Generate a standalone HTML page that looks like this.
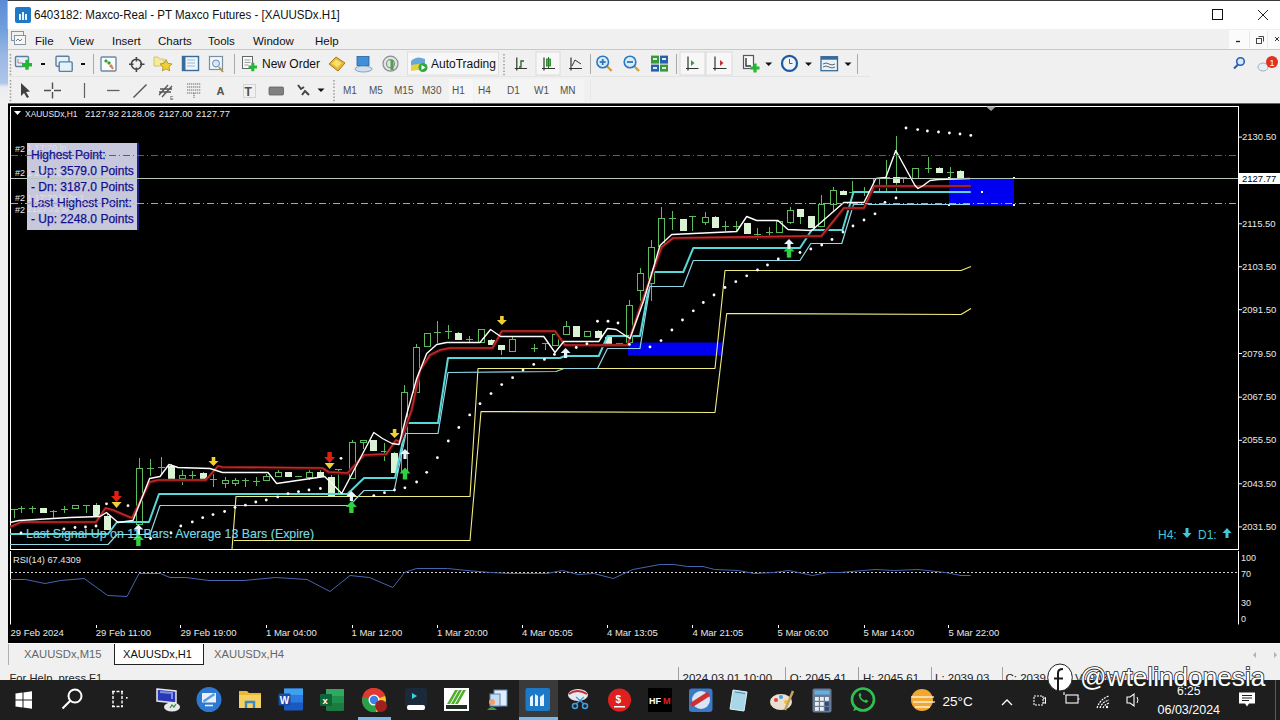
<!DOCTYPE html>
<html><head><meta charset="utf-8">
<style>
*{margin:0;padding:0;box-sizing:border-box}
html,body{width:1280px;height:720px;overflow:hidden;background:#f0f0f0;font-family:"Liberation Sans",sans-serif;position:relative}
.a{position:absolute}
.t{position:absolute;white-space:nowrap;line-height:1}
#desk{left:0;top:0;width:8px;height:720px;background:linear-gradient(#5a8ad4 0,#72a0dc 30px,#98b8e4 55px,#b0c6ea 83px,#e8ecf2 87px,#f0f0f0 100px)}
#title{left:7px;top:0;width:1273px;height:29px;background:#fff;border-top:1px solid #3a3a3a;border-left:1px solid #b8b8b8}
#menu{left:8px;top:29px;width:1272px;height:21px;background:#f0f0f0;border-bottom:1px solid #c8c8c8}
#tb1{left:8px;top:50px;width:1272px;height:27px;background:#f0f0f0}
#tb2{left:8px;top:77px;width:1272px;height:27px;background:#f0f0f0;border-bottom:1px solid #646464}
.mi{font-size:11.5px;color:#111;top:36px}
.tf{font-size:10px;color:#505050;top:86px}
#chart{left:8px;top:104px;width:1272px;height:539px;background:#000}
#tabs{left:8px;top:644px;width:1272px;height:21px;background:#f0f0f0}
#status{left:8px;top:665px;width:1272px;height:15px;background:#f0f0f0;overflow:hidden}
#task{left:0;top:680px;width:1280px;height:40px;background:#202020}
</style></head><body>
<div class="a" id="desk"></div>
<div class="a" id="title"></div>
<div class="a" id="menu"></div>
<div class="a" id="tb1"></div>
<div class="a" id="tb2"></div>
<div class="a" id="chart"></div>
<svg class="a" style="left:0;top:0" width="1280" height="720" viewBox="0 0 1280 720" font-family="Liberation Sans, sans-serif">
<rect x="10.5" y="106.5" width="1228" height="443" fill="none" stroke="#fff" stroke-width="1"/>
<path d="M10.5 551V624.5M1238.5 551V624.5" stroke="#fff" stroke-width="1"/>
<path d="M986 106.5H996L991 111Z" fill="#a0a0a0"/>
<rect x="628" y="342.5" width="95" height="13" fill="#0000f0"/>
<rect x="949" y="178" width="65" height="27.5" fill="#0000f0"/>
<rect x="948" y="177" width="2" height="2" fill="#fff"/>
<rect x="1013" y="177" width="2" height="2" fill="#fff"/>
<rect x="948" y="204" width="2" height="2" fill="#fff"/>
<rect x="1013" y="204" width="2" height="2" fill="#fff"/>
<rect x="981" y="191" width="2" height="2" fill="#fff"/>
<polyline points="232,549.5 236,496.5 470,496.5 478,368.5 715,368.5 725,270.5 961,270.5 971,266.5" fill="none" stroke="#f0ec80" stroke-width="1.1" stroke-linejoin="round" />
<polyline points="234,540.5 470,540.5 481,411.5 715,412.5 726.7,313.5 961,314.5 971,308.5" fill="none" stroke="#f0ec80" stroke-width="1.1" stroke-linejoin="round" />
<path d="M14.5 509V518" stroke="#5cbc5c" stroke-width="1"/>
<path d="M11 509.5H18" stroke="#5cbc5c" stroke-width="1"/>
<path d="M21.5 506V513" stroke="#5cbc5c" stroke-width="1"/>
<path d="M18 508.5H25" stroke="#5cbc5c" stroke-width="1"/>
<path d="M32.5 506V513" stroke="#5cbc5c" stroke-width="1"/>
<path d="M29 508.5H36" stroke="#5cbc5c" stroke-width="1"/>
<path d="M43.5 508V513" stroke="#5cbc5c" stroke-width="1"/>
<rect x="40" y="508.0" width="7" height="5.0" fill="#dcf2d4"/>
<path d="M53.5 510V518" stroke="#5cbc5c" stroke-width="1"/>
<path d="M50 511.5H57" stroke="#5cbc5c" stroke-width="1"/>
<path d="M64.5 506V513" stroke="#5cbc5c" stroke-width="1"/>
<path d="M61 509.5H68" stroke="#5cbc5c" stroke-width="1"/>
<path d="M75.5 505V509" stroke="#5cbc5c" stroke-width="1"/>
<rect x="72.5" y="505.5" width="6" height="3.0" fill="#000" stroke="#5cbc5c" stroke-width="1"/>
<path d="M86.5 505V513" stroke="#5cbc5c" stroke-width="1"/>
<path d="M83 505.5H90" stroke="#5cbc5c" stroke-width="1"/>
<path d="M96.5 503V517" stroke="#5cbc5c" stroke-width="1"/>
<rect x="93" y="505.0" width="7" height="12.0" fill="#dcf2d4"/>
<path d="M107.5 513V530" stroke="#5cbc5c" stroke-width="1"/>
<rect x="104" y="516.0" width="7" height="14.0" fill="#dcf2d4"/>
<path d="M139.5 458V525" stroke="#5cbc5c" stroke-width="1"/>
<rect x="136.5" y="468.5" width="6" height="56.0" fill="#000" stroke="#5cbc5c" stroke-width="1"/>
<path d="M150.5 459V476" stroke="#5cbc5c" stroke-width="1"/>
<path d="M147 468.5H154" stroke="#5cbc5c" stroke-width="1"/>
<path d="M161.5 457V475" stroke="#5cbc5c" stroke-width="1"/>
<path d="M158 467.5H165" stroke="#5cbc5c" stroke-width="1"/>
<path d="M171.5 464V479" stroke="#5cbc5c" stroke-width="1"/>
<rect x="168" y="466.0" width="7" height="13.0" fill="#dcf2d4"/>
<path d="M182.5 470V485" stroke="#5cbc5c" stroke-width="1"/>
<rect x="179.5" y="475.5" width="6" height="3.0" fill="#000" stroke="#5cbc5c" stroke-width="1"/>
<path d="M192.5 471V479" stroke="#5cbc5c" stroke-width="1"/>
<path d="M189 475.5H196" stroke="#5cbc5c" stroke-width="1"/>
<path d="M203.5 472V480" stroke="#5cbc5c" stroke-width="1"/>
<rect x="200" y="473.0" width="7" height="7.0" fill="#dcf2d4"/>
<path d="M213.5 474V487" stroke="#5cbc5c" stroke-width="1"/>
<path d="M210 479.5H217" stroke="#5cbc5c" stroke-width="1"/>
<path d="M225.5 477V488" stroke="#5cbc5c" stroke-width="1"/>
<rect x="222.5" y="480.5" width="6" height="3.0" fill="#000" stroke="#5cbc5c" stroke-width="1"/>
<path d="M235.5 478V486" stroke="#5cbc5c" stroke-width="1"/>
<rect x="232.5" y="480.5" width="6" height="3.0" fill="#000" stroke="#5cbc5c" stroke-width="1"/>
<path d="M245.5 478V487" stroke="#5cbc5c" stroke-width="1"/>
<path d="M242 480.5H249" stroke="#5cbc5c" stroke-width="1"/>
<path d="M256.5 477V486" stroke="#5cbc5c" stroke-width="1"/>
<path d="M253 481.5H260" stroke="#5cbc5c" stroke-width="1"/>
<path d="M266.5 474V481" stroke="#5cbc5c" stroke-width="1"/>
<rect x="263.5" y="476.5" width="6" height="4.0" fill="#000" stroke="#5cbc5c" stroke-width="1"/>
<path d="M278.5 470V477" stroke="#5cbc5c" stroke-width="1"/>
<rect x="275.5" y="472.5" width="6" height="4.0" fill="#000" stroke="#5cbc5c" stroke-width="1"/>
<path d="M288.5 472V477" stroke="#5cbc5c" stroke-width="1"/>
<rect x="285" y="472.0" width="7" height="5.0" fill="#dcf2d4"/>
<path d="M298.5 476V477" stroke="#5cbc5c" stroke-width="1"/>
<path d="M295 476.5H302" stroke="#5cbc5c" stroke-width="1"/>
<path d="M309.5 467V480" stroke="#5cbc5c" stroke-width="1"/>
<rect x="306.5" y="472.5" width="6" height="5.0" fill="#000" stroke="#5cbc5c" stroke-width="1"/>
<path d="M320.5 470V477" stroke="#5cbc5c" stroke-width="1"/>
<rect x="317" y="472.0" width="7" height="5.0" fill="#dcf2d4"/>
<path d="M331.5 475V496" stroke="#5cbc5c" stroke-width="1"/>
<rect x="328" y="477.0" width="7" height="19.0" fill="#dcf2d4"/>
<path d="M338.5 469V495" stroke="#5cbc5c" stroke-width="1"/>
<path d="M335 469.5H342" stroke="#5cbc5c" stroke-width="1"/>
<path d="M352.5 440V479" stroke="#5cbc5c" stroke-width="1"/>
<rect x="349.5" y="442.5" width="6" height="36.0" fill="#000" stroke="#5cbc5c" stroke-width="1"/>
<path d="M363.5 440V449" stroke="#5cbc5c" stroke-width="1"/>
<rect x="360.5" y="440.5" width="6" height="2.0" fill="#000" stroke="#5cbc5c" stroke-width="1"/>
<path d="M373.5 440V451" stroke="#5cbc5c" stroke-width="1"/>
<rect x="370" y="440.0" width="7" height="11.0" fill="#dcf2d4"/>
<path d="M384.5 443V461" stroke="#5cbc5c" stroke-width="1"/>
<path d="M381 451.5H388" stroke="#5cbc5c" stroke-width="1"/>
<path d="M394.5 452V473" stroke="#5cbc5c" stroke-width="1"/>
<rect x="391" y="453.0" width="7" height="20.0" fill="#dcf2d4"/>
<path d="M404.5 385V473" stroke="#5cbc5c" stroke-width="1"/>
<rect x="401.5" y="392.5" width="6" height="80.0" fill="#000" stroke="#5cbc5c" stroke-width="1"/>
<path d="M416.5 344V393" stroke="#5cbc5c" stroke-width="1"/>
<rect x="413.5" y="347.5" width="6" height="45.0" fill="#000" stroke="#5cbc5c" stroke-width="1"/>
<path d="M427.5 333V347" stroke="#5cbc5c" stroke-width="1"/>
<rect x="424.5" y="333.5" width="6" height="13.0" fill="#000" stroke="#5cbc5c" stroke-width="1"/>
<path d="M437.5 321V343" stroke="#5cbc5c" stroke-width="1"/>
<path d="M434 332.5H441" stroke="#5cbc5c" stroke-width="1"/>
<path d="M448.5 325V339" stroke="#5cbc5c" stroke-width="1"/>
<path d="M445 331.5H452" stroke="#5cbc5c" stroke-width="1"/>
<path d="M458.5 332V340" stroke="#5cbc5c" stroke-width="1"/>
<rect x="455" y="333.0" width="7" height="7.0" fill="#dcf2d4"/>
<path d="M469.5 336V342" stroke="#5cbc5c" stroke-width="1"/>
<path d="M466 339.5H473" stroke="#5cbc5c" stroke-width="1"/>
<path d="M481.5 329V343" stroke="#5cbc5c" stroke-width="1"/>
<rect x="478.5" y="329.5" width="6" height="13.0" fill="#000" stroke="#5cbc5c" stroke-width="1"/>
<path d="M491.5 339V345" stroke="#5cbc5c" stroke-width="1"/>
<rect x="488" y="340.0" width="7" height="5.0" fill="#dcf2d4"/>
<path d="M501.5 345V355" stroke="#5cbc5c" stroke-width="1"/>
<rect x="498" y="345.0" width="7" height="5.0" fill="#dcf2d4"/>
<path d="M512.5 336V352" stroke="#5cbc5c" stroke-width="1"/>
<rect x="509.5" y="339.5" width="6" height="12.0" fill="#000" stroke="#5cbc5c" stroke-width="1"/>
<path d="M534.5 344V352" stroke="#5cbc5c" stroke-width="1"/>
<path d="M531 348.5H538" stroke="#5cbc5c" stroke-width="1"/>
<path d="M545.5 343V350" stroke="#5cbc5c" stroke-width="1"/>
<path d="M542 343.5H549" stroke="#5cbc5c" stroke-width="1"/>
<path d="M555.5 334V346" stroke="#5cbc5c" stroke-width="1"/>
<rect x="552.5" y="334.5" width="6" height="11.0" fill="#000" stroke="#5cbc5c" stroke-width="1"/>
<path d="M566.5 321V335" stroke="#5cbc5c" stroke-width="1"/>
<rect x="563.5" y="326.5" width="6" height="8.0" fill="#000" stroke="#5cbc5c" stroke-width="1"/>
<path d="M576.5 326V337" stroke="#5cbc5c" stroke-width="1"/>
<rect x="573" y="326.0" width="7" height="11.0" fill="#dcf2d4"/>
<path d="M587.5 331V337" stroke="#5cbc5c" stroke-width="1"/>
<rect x="584.5" y="331.5" width="6" height="5.0" fill="#000" stroke="#5cbc5c" stroke-width="1"/>
<path d="M598.5 330V338" stroke="#5cbc5c" stroke-width="1"/>
<rect x="595" y="331.0" width="7" height="7.0" fill="#dcf2d4"/>
<path d="M608.5 336V345" stroke="#5cbc5c" stroke-width="1"/>
<rect x="605" y="337.0" width="7" height="8.0" fill="#dcf2d4"/>
<path d="M619.5 343V345" stroke="#5cbc5c" stroke-width="1"/>
<path d="M616 343.5H623" stroke="#5cbc5c" stroke-width="1"/>
<path d="M629.5 300V343" stroke="#5cbc5c" stroke-width="1"/>
<rect x="626.5" y="305.5" width="6" height="37.0" fill="#000" stroke="#5cbc5c" stroke-width="1"/>
<path d="M640.5 268V301" stroke="#5cbc5c" stroke-width="1"/>
<rect x="637.5" y="273.5" width="6" height="17.0" fill="#000" stroke="#5cbc5c" stroke-width="1"/>
<path d="M651.5 240V301" stroke="#5cbc5c" stroke-width="1"/>
<rect x="648.5" y="247.5" width="6" height="36.0" fill="#000" stroke="#5cbc5c" stroke-width="1"/>
<path d="M661.5 207V247" stroke="#5cbc5c" stroke-width="1"/>
<rect x="658.5" y="218.5" width="6" height="28.0" fill="#000" stroke="#5cbc5c" stroke-width="1"/>
<path d="M672.5 211V230" stroke="#5cbc5c" stroke-width="1"/>
<path d="M669 218.5H676" stroke="#5cbc5c" stroke-width="1"/>
<path d="M683.5 219V231" stroke="#5cbc5c" stroke-width="1"/>
<rect x="680" y="219.0" width="7" height="12.0" fill="#dcf2d4"/>
<path d="M692.5 216V231" stroke="#5cbc5c" stroke-width="1"/>
<path d="M689 216.5H696" stroke="#5cbc5c" stroke-width="1"/>
<path d="M705.5 212V225" stroke="#5cbc5c" stroke-width="1"/>
<rect x="702.5" y="217.5" width="6" height="5.0" fill="#000" stroke="#5cbc5c" stroke-width="1"/>
<path d="M715.5 216V228" stroke="#5cbc5c" stroke-width="1"/>
<rect x="712" y="217.0" width="7" height="11.0" fill="#dcf2d4"/>
<path d="M725.5 221V231" stroke="#5cbc5c" stroke-width="1"/>
<path d="M722 226.5H729" stroke="#5cbc5c" stroke-width="1"/>
<path d="M736.5 221V231" stroke="#5cbc5c" stroke-width="1"/>
<path d="M733 226.5H740" stroke="#5cbc5c" stroke-width="1"/>
<path d="M747.5 223V234" stroke="#5cbc5c" stroke-width="1"/>
<rect x="744" y="223.0" width="7" height="11.0" fill="#dcf2d4"/>
<path d="M757.5 228V240" stroke="#5cbc5c" stroke-width="1"/>
<path d="M754 234.5H761" stroke="#5cbc5c" stroke-width="1"/>
<path d="M769.5 227V238" stroke="#5cbc5c" stroke-width="1"/>
<path d="M766 232.5H773" stroke="#5cbc5c" stroke-width="1"/>
<path d="M779.5 221V233" stroke="#5cbc5c" stroke-width="1"/>
<rect x="776.5" y="221.5" width="6" height="11.0" fill="#000" stroke="#5cbc5c" stroke-width="1"/>
<path d="M790.5 207V224" stroke="#5cbc5c" stroke-width="1"/>
<rect x="787.5" y="210.5" width="6" height="12.0" fill="#000" stroke="#5cbc5c" stroke-width="1"/>
<path d="M800.5 209V224" stroke="#5cbc5c" stroke-width="1"/>
<rect x="797" y="209.0" width="7" height="8.0" fill="#dcf2d4"/>
<path d="M811.5 216V228" stroke="#5cbc5c" stroke-width="1"/>
<rect x="808" y="216.0" width="7" height="12.0" fill="#dcf2d4"/>
<path d="M821.5 195V227" stroke="#5cbc5c" stroke-width="1"/>
<rect x="818.5" y="204.5" width="6" height="22.0" fill="#000" stroke="#5cbc5c" stroke-width="1"/>
<path d="M833.5 187V211" stroke="#5cbc5c" stroke-width="1"/>
<rect x="830.5" y="190.5" width="6" height="14.0" fill="#000" stroke="#5cbc5c" stroke-width="1"/>
<path d="M843.5 190V195" stroke="#5cbc5c" stroke-width="1"/>
<rect x="840" y="191.0" width="7" height="4.0" fill="#dcf2d4"/>
<path d="M852.5 181V198" stroke="#5cbc5c" stroke-width="1"/>
<path d="M849 192.5H856" stroke="#5cbc5c" stroke-width="1"/>
<path d="M864.5 187V196" stroke="#5cbc5c" stroke-width="1"/>
<path d="M861 191.5H868" stroke="#5cbc5c" stroke-width="1"/>
<path d="M876.5 178V192" stroke="#5cbc5c" stroke-width="1"/>
<rect x="873.5" y="178.5" width="6" height="13.0" fill="#000" stroke="#5cbc5c" stroke-width="1"/>
<path d="M886.5 160V192" stroke="#5cbc5c" stroke-width="1"/>
<path d="M883 177.5H890" stroke="#5cbc5c" stroke-width="1"/>
<path d="M896.5 136V193" stroke="#5cbc5c" stroke-width="1"/>
<rect x="893" y="177.0" width="7" height="6.0" fill="#dcf2d4"/>
<path d="M903.5 177V183" stroke="#5cbc5c" stroke-width="1"/>
<path d="M900 177.5H907" stroke="#5cbc5c" stroke-width="1"/>
<path d="M915.5 168V179" stroke="#5cbc5c" stroke-width="1"/>
<rect x="912.5" y="168.5" width="6" height="10.0" fill="#000" stroke="#5cbc5c" stroke-width="1"/>
<path d="M928.5 157V173" stroke="#5cbc5c" stroke-width="1"/>
<path d="M925 168.5H932" stroke="#5cbc5c" stroke-width="1"/>
<path d="M939.5 167V173" stroke="#5cbc5c" stroke-width="1"/>
<rect x="936" y="168.0" width="7" height="5.0" fill="#dcf2d4"/>
<path d="M950.5 167V179" stroke="#5cbc5c" stroke-width="1"/>
<path d="M947 172.5H954" stroke="#5cbc5c" stroke-width="1"/>
<path d="M960.5 170V179" stroke="#5cbc5c" stroke-width="1"/>
<rect x="957" y="171.0" width="7" height="8.0" fill="#dcf2d4"/>
<polyline points="10,534 108,534 117,522 149,522 159,494 347.5,494 364,478 395,478 406.8,423 438,423 448,358 560,358 565,356 598.75,356 607.5,336 640,336 651.7,272 683.3,272 693.3,248 800,248 811.7,230 842.5,230 853.5,192 970.8,192" fill="none" stroke="#58d8d8" stroke-width="2" stroke-linejoin="round" />
<polyline points="10,544.5 108,544.5 117,534.5 150,534.5 160,505.5 349.6,505.5 364,490.5 394.2,490.5 405.9,433.5 438,433.5 448,372.5 556,371.5 564,368.5 597.5,368.5 607.5,348.5 640,348.5 650,286.5 683.3,286.5 693.3,260.5 800,260.5 810.8,243.5 841.8,243.5 853.5,204.5 970,204.5" fill="none" stroke="#90d8e8" stroke-width="1.2" stroke-linejoin="round" />
<polyline points="10,527.5 21,522.5 96,522.5 105.6,508.5 113,510.5 132,518.5 149.6,482.5 158,480.5 205.8,480.5 218,466.5 222.5,467.5 322.5,468.5 328.75,472.5 347.5,473.5 364,455.5 386.4,454.5 396,440.5 400,442.5 411.7,410.5 420,370.5 430,355.5 440,350.5 450,348.5 492.5,348.5 501.9,331.5 555,331.5 565,345.5 627.5,345.5 642.5,300.5 661.7,247.5 673,238.5 810,236.5 821.4,236.5 843.8,208.5 864,208.5 874,186.5 970.8,186.5" fill="none" stroke="#480c0c" stroke-width="3.4" stroke-linejoin="round" />
<polyline points="10,527 21,522 96,522 105.6,508 113,510 132,518 149.6,482 158,480 205.8,480 218,466 222.5,467 322.5,468 328.75,472 347.5,473 364,455 386.4,454 396,440 400,442 411.7,410 420,370 430,355 440,350 450,348 492.5,348 501.9,331 555,331 565,345 627.5,345 642.5,300 661.7,247 673,238 810,236 821.4,236 843.8,208 864,208 874,186 970.8,186" fill="none" stroke="#c02a2a" stroke-width="1.6" stroke-linejoin="round" />
<polyline points="10,522.5 19,520.5 70,517.5 100,516.5 106.5,512.5 118,522.5 133,520.5 149.6,478.5 160,476.5 169,464.5 178,467.5 210,468.5 222.5,472.5 268,472.5 276.7,483.5 324.6,476.5 333,484.5 341.7,493.5 373.8,432.5 382.5,438.5 392,443.5 399,444.5 407.8,410.5 416.7,378.5 426.7,353.5 436.7,344.5 446.7,342.5 480,342.5 490.6,329.5 500.6,336.5 543.75,336.5 555,352.5 563.75,341.5 598.75,341.5 607.5,328.5 616.25,329.5 623.75,334.5 630,338.5 643.75,300.5 660,245.5 671.7,234.5 736.7,231.5 746.7,216.5 756.7,220.5 778,220.5 788,229.5 811.7,230.5 843.8,202.5 864,202.5 875.9,178.5 885.8,177.5 895.8,150.5 915,185.5 918,188.5 923.3,185.5 930,180.5 938.3,179.5 970,178.5" fill="none" stroke="#ffffff" stroke-width="1.4" stroke-linejoin="round" />
<circle cx="21" cy="533" r="1.4" fill="#fff"/>
<circle cx="64" cy="529" r="1.4" fill="#fff"/>
<circle cx="75" cy="527.5" r="1.4" fill="#fff"/>
<circle cx="85.5" cy="527" r="1.4" fill="#fff"/>
<circle cx="96" cy="526" r="1.4" fill="#fff"/>
<circle cx="106.5" cy="503.8" r="1.4" fill="#fff"/>
<circle cx="128" cy="505.7" r="1.4" fill="#fff"/>
<circle cx="150.6" cy="538.5" r="1.4" fill="#fff"/>
<circle cx="171" cy="533" r="1.4" fill="#fff"/>
<circle cx="180.8" cy="526" r="1.4" fill="#fff"/>
<circle cx="192.3" cy="521.9" r="1.4" fill="#fff"/>
<circle cx="202.7" cy="517.7" r="1.4" fill="#fff"/>
<circle cx="213" cy="514.6" r="1.4" fill="#fff"/>
<circle cx="224.6" cy="511.5" r="1.4" fill="#fff"/>
<circle cx="235" cy="507.3" r="1.4" fill="#fff"/>
<circle cx="245.4" cy="505.2" r="1.4" fill="#fff"/>
<circle cx="255.8" cy="502" r="1.4" fill="#fff"/>
<circle cx="266.25" cy="500" r="1.4" fill="#fff"/>
<circle cx="277.7" cy="496.9" r="1.4" fill="#fff"/>
<circle cx="288" cy="493.75" r="1.4" fill="#fff"/>
<circle cx="298.5" cy="491.7" r="1.4" fill="#fff"/>
<circle cx="309" cy="490" r="1.4" fill="#fff"/>
<circle cx="320.4" cy="488.5" r="1.4" fill="#fff"/>
<circle cx="341" cy="458.3" r="1.4" fill="#fff"/>
<circle cx="373.8" cy="495.6" r="1.4" fill="#fff"/>
<circle cx="384.5" cy="492.7" r="1.4" fill="#fff"/>
<circle cx="394.5" cy="490" r="1.4" fill="#fff"/>
<circle cx="404.9" cy="487.8" r="1.4" fill="#fff"/>
<circle cx="416.6" cy="482" r="1.4" fill="#fff"/>
<circle cx="426.7" cy="472.3" r="1.4" fill="#fff"/>
<circle cx="437.4" cy="457.7" r="1.4" fill="#fff"/>
<circle cx="448.3" cy="441" r="1.4" fill="#fff"/>
<circle cx="458.8" cy="427.5" r="1.4" fill="#fff"/>
<circle cx="469.7" cy="414.9" r="1.4" fill="#fff"/>
<circle cx="480" cy="403.7" r="1.4" fill="#fff"/>
<circle cx="491" cy="393.6" r="1.4" fill="#fff"/>
<circle cx="501.7" cy="384.6" r="1.4" fill="#fff"/>
<circle cx="512.6" cy="377.7" r="1.4" fill="#fff"/>
<circle cx="523" cy="370" r="1.4" fill="#fff"/>
<circle cx="533.75" cy="364.4" r="1.4" fill="#fff"/>
<circle cx="544.4" cy="359.4" r="1.4" fill="#fff"/>
<circle cx="554.4" cy="354.4" r="1.4" fill="#fff"/>
<circle cx="576.25" cy="347.5" r="1.4" fill="#fff"/>
<circle cx="586.9" cy="343.75" r="1.4" fill="#fff"/>
<circle cx="597.5" cy="321.25" r="1.4" fill="#fff"/>
<circle cx="608" cy="321.25" r="1.4" fill="#fff"/>
<circle cx="618" cy="323" r="1.4" fill="#fff"/>
<circle cx="629.4" cy="344.4" r="1.4" fill="#fff"/>
<circle cx="650" cy="346.9" r="1.4" fill="#fff"/>
<circle cx="661" cy="340.6" r="1.4" fill="#fff"/>
<circle cx="671.9" cy="330" r="1.4" fill="#fff"/>
<circle cx="682.5" cy="320" r="1.4" fill="#fff"/>
<circle cx="693.3" cy="310.8" r="1.4" fill="#fff"/>
<circle cx="703.3" cy="302.5" r="1.4" fill="#fff"/>
<circle cx="714" cy="295" r="1.4" fill="#fff"/>
<circle cx="725" cy="287.5" r="1.4" fill="#fff"/>
<circle cx="735.8" cy="281.7" r="1.4" fill="#fff"/>
<circle cx="746.7" cy="275.8" r="1.4" fill="#fff"/>
<circle cx="757.5" cy="270" r="1.4" fill="#fff"/>
<circle cx="767.5" cy="265" r="1.4" fill="#fff"/>
<circle cx="778.3" cy="259" r="1.4" fill="#fff"/>
<circle cx="789" cy="256" r="1.4" fill="#fff"/>
<circle cx="800" cy="252.5" r="1.4" fill="#fff"/>
<circle cx="810.8" cy="249" r="1.4" fill="#fff"/>
<circle cx="821.7" cy="245" r="1.4" fill="#fff"/>
<circle cx="832" cy="239.5" r="1.4" fill="#fff"/>
<circle cx="843" cy="232" r="1.4" fill="#fff"/>
<circle cx="853" cy="226" r="1.4" fill="#fff"/>
<circle cx="864" cy="220" r="1.4" fill="#fff"/>
<circle cx="875" cy="213.8" r="1.4" fill="#fff"/>
<circle cx="885" cy="202.5" r="1.4" fill="#fff"/>
<circle cx="896" cy="198" r="1.4" fill="#fff"/>
<circle cx="906" cy="128" r="1.4" fill="#fff"/>
<circle cx="917.7" cy="129.6" r="1.4" fill="#fff"/>
<circle cx="927.4" cy="131" r="1.4" fill="#fff"/>
<circle cx="938.5" cy="132" r="1.4" fill="#fff"/>
<circle cx="949.4" cy="133" r="1.4" fill="#fff"/>
<circle cx="960" cy="134" r="1.4" fill="#fff"/>
<circle cx="970.8" cy="135.4" r="1.4" fill="#fff"/>
<path d="M116.5 502L122.0 496H118.7V491H114.3V496H111.0Z" fill="#e02010"/>
<path d="M116.5 508L121.5 502H118.7V502H114.3V502H111.5Z" fill="#f0d040"/>
<path d="M329.6 463L335.1 457H331.8V452H327.40000000000003V457H324.1Z" fill="#e02010"/>
<path d="M329.6 469L334.6 463H331.8V463H327.40000000000003V463H324.6Z" fill="#f0d040"/>
<path d="M213.5 466L218.5 461H215.3V457H211.7V461H208.5Z" fill="#f0d030"/>
<path d="M394.6 438L399.6 433H396.40000000000003V429H392.8V433H389.6Z" fill="#f0d030"/>
<path d="M501.9 325L506.9 320H503.7V316H500.09999999999997V320H496.9Z" fill="#f0d030"/>
<path d="M138.4 534L143.9 540H140.6V546H136.20000000000002V540H132.9Z" fill="#30d040"/>
<path d="M351.4 501L356.9 507H353.59999999999997V513H349.2V507H345.9Z" fill="#30d040"/>
<path d="M405 467.5L410.5 473.5H407.2V479.5H402.8V473.5H399.5Z" fill="#30d040"/>
<path d="M789 245.5L794.5 251.5H791.2V257.5H786.8V251.5H783.5Z" fill="#30d040"/>
<path d="M138.4 524.5L143.4 529.5H140.0V534.5H136.8V529.5H133.4Z" fill="#e8f4ff"/>
<path d="M351.4 491L356.4 496H353.0V501H349.79999999999995V496H346.4Z" fill="#e8f4ff"/>
<path d="M405 449L410 454H406.6V459H403.4V454H400Z" fill="#e8f4ff"/>
<path d="M565.6 348L570.6 353H567.2V358H564.0V353H560.6Z" fill="#e8f4ff"/>
<path d="M789 239L794 244H790.6V249H787.4V244H784Z" fill="#e8f4ff"/>
<line x1="11" y1="572.5" x2="1238" y2="572.5" stroke="#d0d0d0" stroke-width="1" stroke-dasharray="2 2"/>
<polyline points="10,579.5 25.6,579.5 45,583.5 60.8,580.5 84.2,578.5 107.7,595.5 127,596.5 139,573.5 160.4,573.5 170,577.5 185.8,577.5 209,580.5 244,580.5 275.6,577.5 307,579.5 330,591.5 350,575.5 369.4,577.5 392.8,587.5 404.5,572.5 416.25,568.5 447.5,568.5 467,570.5 490.5,572.5 510,573.5 546.9,573.5 562.5,570.5 578,574.5 593.75,573.5 613.3,578.5 632.8,569.5 660,564.5 673.8,564.5 687.5,566.5 703,566.5 714.8,569.5 738.3,570.5 754,573.5 773.4,572.5 789,570.5 812.5,575.5 828,572.5 839.8,572.5 875,569.5 894.5,570.5 918,569.5 945.3,572.5 961,575.5 970.7,575.5" fill="none" stroke="#4664b0" stroke-width="1" stroke-linejoin="round" />
<path d="M1239 137.1H1242" stroke="#fff"/>
<text x="1242" y="140.1" font-size="9.5" fill="#e8e8e8">2130.50</text>
<path d="M1239 223.8H1242" stroke="#fff"/>
<text x="1242" y="226.8" font-size="9.5" fill="#e8e8e8">2115.50</text>
<path d="M1239 266.75H1242" stroke="#fff"/>
<text x="1242" y="269.75" font-size="9.5" fill="#e8e8e8">2103.50</text>
<path d="M1239 309.7H1242" stroke="#fff"/>
<text x="1242" y="312.7" font-size="9.5" fill="#e8e8e8">2091.50</text>
<path d="M1239 353.5H1242" stroke="#fff"/>
<text x="1242" y="356.5" font-size="9.5" fill="#e8e8e8">2079.50</text>
<path d="M1239 397.2H1242" stroke="#fff"/>
<text x="1242" y="400.2" font-size="9.5" fill="#e8e8e8">2067.50</text>
<path d="M1239 440.3H1242" stroke="#fff"/>
<text x="1242" y="443.3" font-size="9.5" fill="#e8e8e8">2055.50</text>
<path d="M1239 483.8H1242" stroke="#fff"/>
<text x="1242" y="486.8" font-size="9.5" fill="#e8e8e8">2043.50</text>
<path d="M1239 526.9H1242" stroke="#fff"/>
<text x="1242" y="529.9" font-size="9.5" fill="#e8e8e8">2031.50</text>
<rect x="1239" y="173" width="41" height="11" fill="#fff"/>
<text x="1242" y="181.8" font-size="9.5" fill="#000">2127.77</text>
<text x="1241" y="560.6" font-size="9" fill="#e8e8e8">100</text>
<text x="1241" y="576.6" font-size="9" fill="#e8e8e8">70</text>
<text x="1241" y="606.4" font-size="9" fill="#e8e8e8">30</text>
<text x="1241" y="621.7" font-size="9" fill="#e8e8e8">0</text>
<text x="10.5" y="636" font-size="9.5" fill="#e8e8e8">29 Feb 2024</text>
<path d="M96.5 625V628" stroke="#fff"/>
<text x="95.75" y="636" font-size="9.5" fill="#e8e8e8">29 Feb 11:00</text>
<path d="M180.5 625V628" stroke="#fff"/>
<text x="180.5" y="636" font-size="9.5" fill="#e8e8e8">29 Feb 19:00</text>
<path d="M266.5 625V628" stroke="#fff"/>
<text x="266" y="636" font-size="9.5" fill="#e8e8e8">1 Mar 04:00</text>
<path d="M352.5 625V628" stroke="#fff"/>
<text x="351.5" y="636" font-size="9.5" fill="#e8e8e8">1 Mar 12:00</text>
<path d="M437.5 625V628" stroke="#fff"/>
<text x="437" y="636" font-size="9.5" fill="#e8e8e8">1 Mar 20:00</text>
<path d="M522.5 625V628" stroke="#fff"/>
<text x="522" y="636" font-size="9.5" fill="#e8e8e8">4 Mar 05:05</text>
<path d="M607.5 625V628" stroke="#fff"/>
<text x="607" y="636" font-size="9.5" fill="#e8e8e8">4 Mar 13:05</text>
<path d="M692.5 625V628" stroke="#fff"/>
<text x="692.5" y="636" font-size="9.5" fill="#e8e8e8">4 Mar 21:05</text>
<path d="M778.5 625V628" stroke="#fff"/>
<text x="777.5" y="636" font-size="9.5" fill="#e8e8e8">5 Mar 06:00</text>
<path d="M864.5 625V628" stroke="#fff"/>
<text x="863.5" y="636" font-size="9.5" fill="#e8e8e8">5 Mar 14:00</text>
<path d="M948.5 625V628" stroke="#fff"/>
<text x="948.5" y="636" font-size="9.5" fill="#e8e8e8">5 Mar 22:00</text>
<path d="M14 111H21L17.5 115Z" fill="#fff"/>
<text x="25" y="117" font-size="9.4" fill="#e8e8e8" textLength="52.5" lengthAdjust="spacingAndGlyphs">XAUUSDx,H1</text>
<text x="85" y="117" font-size="9.4" fill="#e8e8e8">2127.92</text>
<text x="121" y="117" font-size="9.4" fill="#e8e8e8">2128.06</text>
<text x="158.7" y="117" font-size="9.4" fill="#e8e8e8">2127.00</text>
<text x="196" y="117" font-size="9.4" fill="#e8e8e8">2127.77</text>
<text x="13" y="563" font-size="9.25" fill="#e8e8e8">RSI(14) 67.4309</text>
<text x="15" y="151.5" font-size="9" fill="#e8e8e8">#2</text>
<text x="15" y="176" font-size="9" fill="#e8e8e8">#2</text>
<text x="15" y="201" font-size="9" fill="#e8e8e8">#2</text>
<text x="15" y="213" font-size="9" fill="#e8e8e8">#2</text>
<rect x="27" y="143" width="112" height="87" fill="#c8c8dc"/>
<rect x="137" y="143" width="2" height="87" fill="#202080"/>
<text x="31" y="159" font-size="12" fill="#10108a" stroke="#10108a" stroke-width="0.25">Highest Point:</text>
<text x="31" y="175" font-size="12" fill="#10108a" stroke="#10108a" stroke-width="0.25">- Up: 3579.0 Points</text>
<text x="31" y="191" font-size="12" fill="#10108a" stroke="#10108a" stroke-width="0.25">- Dn: 3187.0 Points</text>
<text x="31" y="207" font-size="12" fill="#10108a" stroke="#10108a" stroke-width="0.25">Last Highest Point:</text>
<text x="31" y="223" font-size="12" fill="#10108a" stroke="#10108a" stroke-width="0.25">- Up: 2248.0 Points</text>
<line x1="11" y1="155.5" x2="1238" y2="155.5" stroke="#b83838" stroke-width="1" stroke-dasharray="7 3 1 3"/>
<line x1="11" y1="178.5" x2="1238" y2="178.5" stroke="#b8c8b8" stroke-width="1"/>
<line x1="11" y1="203.5" x2="1238" y2="203.5" stroke="#94b494" stroke-width="1" stroke-dasharray="7 3 1 3"/>
<text x="27" y="151" font-size="9" fill="#ffffff" fill-opacity="0.45">1 17:70 ln</text>
<text x="27" y="175.5" font-size="9" fill="#ffffff" fill-opacity="0.45">1 2127.0 ,p</text>
<text x="27" y="200.5" font-size="9" fill="#ffffff" fill-opacity="0.45">1 17:70 ln hr 1</text>
<text x="27" y="212" font-size="9" fill="#ffffff" fill-opacity="0.45">2127.72 S</text>
<text x="26" y="537.8" font-size="12.4" fill="#78d8e0" stroke="#78d8e0" stroke-width="0.15">Last Signal Up on 11 Bars: Average 13 Bars (Expire)</text>
<text x="1158" y="538.9" font-size="12" fill="#40c8d8">H4:</text>
<text x="1198" y="538.9" font-size="12" fill="#40c8d8">D1:</text>
<path d="M1187 538L1191.5 533H1188.5V528H1185.5V533H1182.5Z" fill="#40c8d8"/>
<path d="M1227 528L1231.5 533H1228.5V538H1225.5V533H1222.5Z" fill="#40c8d8"/>
</svg>
<div class="a" id="tabs"></div>
<div class="a" id="status"></div>
<div class="a" id="task"></div>

<!-- title -->
<div class="a" style="left:15px;top:7px;width:16px;height:16px;background:#1e78c8;border-radius:2px"></div>
<svg class="a" style="left:15px;top:7px" width="16" height="16"><rect x="4" y="7" width="2" height="6" fill="#e8f2fc"/><rect x="7" y="5" width="2" height="8" fill="#e8f2fc"/><rect x="10" y="7" width="2" height="6" fill="#e8f2fc"/></svg>
<div class="t" style="left:34px;top:9px;font-size:12px;color:#111;transform:scaleX(0.962);transform-origin:0 0">6403182: Maxco-Real - PT Maxco Futures - [XAUUSDx.H1]</div>
<div class="a" style="left:1212px;top:9px;width:11px;height:11px;border:1px solid #111"></div>
<svg class="a" style="left:1257px;top:9px" width="12" height="12"><path d="M1 1L11 11M11 1L1 11" stroke="#222" stroke-width="1"/></svg>

<!-- menu -->
<div class="t mi" style="left:35px">File</div>
<div class="t mi" style="left:69px">View</div>
<div class="t mi" style="left:112px">Insert</div>
<div class="t mi" style="left:158px">Charts</div>
<div class="t mi" style="left:208px">Tools</div>
<div class="t mi" style="left:253px">Window</div>
<div class="t mi" style="left:315px">Help</div>

<svg class="a" style="left:0;top:0" width="1280" height="110" viewBox="0 0 1280 110" font-family="Liberation Sans, sans-serif">
<line x1="10.5" y1="54" x2="10.5" y2="76" stroke="#9a9a9a" stroke-width="1.5" stroke-dasharray="1.5 1.8"/>
<line x1="10.5" y1="80" x2="10.5" y2="102" stroke="#9a9a9a" stroke-width="1.5" stroke-dasharray="1.5 1.8"/>
<line x1="504" y1="54" x2="504" y2="76" stroke="#9a9a9a" stroke-width="1.5" stroke-dasharray="1.5 1.8"/>
<line x1="334" y1="80" x2="334" y2="102" stroke="#9a9a9a" stroke-width="1.5" stroke-dasharray="1.5 1.8"/>
<line x1="93.5" y1="54" x2="93.5" y2="74" stroke="#a8a8a8" stroke-width="1"/>
<line x1="234.5" y1="54" x2="234.5" y2="74" stroke="#a8a8a8" stroke-width="1"/>
<line x1="590.5" y1="54" x2="590.5" y2="74" stroke="#a8a8a8" stroke-width="1"/>
<line x1="676.5" y1="54" x2="676.5" y2="74" stroke="#a8a8a8" stroke-width="1"/>
<line x1="857.5" y1="54" x2="857.5" y2="74" stroke="#a8a8a8" stroke-width="1"/>
<line x1="590.5" y1="80" x2="590.5" y2="102" stroke="#e8e8e8"/>
<line x1="8" y1="76.5" x2="870" y2="76.5" stroke="#e4e4e4"/>
<rect x="407.5" y="52" width="91" height="23" fill="#f7f7f7" stroke="#dadada" stroke-width="0.8"/>
<rect x="536" y="52" width="24" height="23" fill="#f7f7f7" stroke="#d4d4d4" stroke-width="0.8"/>
<rect x="680" y="52" width="25" height="23" fill="#f7f7f7" stroke="#d4d4d4" stroke-width="0.8"/>
<rect x="706" y="52" width="26" height="23" fill="#f7f7f7" stroke="#d4d4d4" stroke-width="0.8"/>
<rect x="449" y="79" width="24" height="23" fill="#f7f7f7"/>
<rect x="474" y="79" width="110" height="23" fill="#f4f4f4"/>
<rect x="15.5" y="56.5" width="13" height="10" fill="#e4f2fa" stroke="#5a7fa0" stroke-width="1.4" rx="1"/>
<path d="M18 59v4h5" stroke="#a06080" stroke-width="0.8" fill="none"/>
<path d="M22.0 64.8H32.0M27 59.8V69.8" stroke="#22b830" stroke-width="3.4"/>
<rect x="41" y="63" width="4" height="2" fill="#111"/>
<rect x="56.0" y="56.2" width="13" height="10" fill="#e4f2fa" stroke="#5a7fa0" stroke-width="1.4" rx="1"/>
<rect x="59.2" y="61.9" width="13" height="9.5" fill="#e4f2fa" stroke="#5a7fa0" stroke-width="1.4" rx="1"/>
<rect x="81" y="63" width="4" height="2" fill="#111"/>
<rect x="101.0" y="57.0" width="15" height="14" fill="#fbfdff" stroke="#6a88a8" stroke-width="1.4" rx="1"/>
<path d="M104 61l2-2 2 2-2 2zM107 63l2-2 2 2-2 2z" fill="#30a030"/><path d="M109 66l2-2 2 2-2 2zM111 68l1.5-1.5 1.5 1.5-1.5 1.5z" fill="#e08040"/>
<circle cx="136.4" cy="64.2" r="5" fill="none" stroke="#444" stroke-width="1.6"/>
<path d="M129 64.2h4.5M140 64.2h4.5M136.4 57v4.5M136.4 67.5v4.5" stroke="#444" stroke-width="1.6"/>
<path d="M154 57h4l1.5 2H164v7h-10z" fill="#f4ec98" stroke="#c8b860" stroke-width="0.8"/>
<path d="M166 59.5l1.9 3.8 4.1.6-3 2.9.7 4.1-3.7-2-3.7 2 .7-4.1-3-2.9 4.1-.6z" fill="#f0d030" stroke="#a08020" stroke-width="0.7"/>
<rect x="182.5" y="56.5" width="16" height="14" fill="#eef6fc" stroke="#3a6a98" stroke-width="1.4"/>
<rect x="182.5" y="56.5" width="3" height="14" fill="#3a6a98"/>
<path d="M187 60h8M187 63h8M187 66h8" stroke="#8aa8c8" stroke-width="0.8"/>
<rect x="209.5" y="56.5" width="13" height="13" fill="#f4f8fc" stroke="#7890a8" stroke-width="1.2"/>
<circle cx="216" cy="63.5" r="3.5" fill="#d8e8f4" stroke="#6a88a8" stroke-width="1"/>
<path d="M219 67l4 5" stroke="#c09040" stroke-width="2"/>
<rect x="242.5" y="56.5" width="10" height="12" fill="#fafafa" stroke="#606868" stroke-width="1"/>
<path d="M244.5 60h6M244.5 62.5h6M244.5 65h4" stroke="#888" stroke-width="0.8"/>
<path d="M248.55 67H257.05M252.8 62.75V71.25" stroke="#22b830" stroke-width="3"/>
<path d="M329 64l7-7 9 6-7 8z" fill="#e8b838" stroke="#a87818" stroke-width="1"/><path d="M332 63.5l4-4 5.5 3.5-4 4.5z" fill="#f8e070"/>
<rect x="357" y="56.5" width="12" height="9" fill="#4090d8" stroke="#2a60a0" stroke-width="0.8"/>
<ellipse cx="363.5" cy="69" rx="8.5" ry="3" fill="#d0e0ee" stroke="#7090b0" stroke-width="0.8"/>
<circle cx="390.5" cy="63.7" r="7.5" fill="#e0e4e0" stroke="#8a9090" stroke-width="1.2"/><circle cx="390.5" cy="63.7" r="4" fill="none" stroke="#8a9090" stroke-width="1.2"/><path d="M392 60v10" stroke="#50a050" stroke-width="3"/>
<path d="M411 61q6-6 14-2v8q-7 3-14 0z" fill="#68a8d8"/><path d="M411 65l14-2v6l-14 2z" fill="#e8d040"/><circle cx="423" cy="67.5" r="4.5" fill="#30a840"/><path d="M421.5 65v5l4-2.5z" fill="#fff"/>
<text x="431" y="68.3" font-size="12" fill="#111">AutoTrading</text>
<text x="262" y="68.3" font-size="12" fill="#111">New Order</text>
<path d="M516.8 57.5V70.5M514.8 68.5H527" stroke="#333" stroke-width="1.2" fill="none"/>
<path d="M519 67h2v-6h3" stroke="#207020" stroke-width="1.4" fill="none"/>
<path d="M544 57.5V70.5M542 68.5H555" stroke="#333" stroke-width="1.2" fill="none"/>
<rect x="546.5" y="59" width="4" height="7" fill="#40c040" stroke="#208020" stroke-width="0.8"/><path d="M548.5 57v11" stroke="#208020"/>
<path d="M571 57.5V70.5M569 68.5H582" stroke="#333" stroke-width="1.2" fill="none"/>
<path d="M572 66l3-6 6 4" stroke="#333" stroke-width="1" fill="none"/>
<path d="M606.7 66l5 5" stroke="#d0a040" stroke-width="2.4"/>
<circle cx="602.7" cy="62" r="5.8" fill="#d8ecfa" stroke="#2a78c0" stroke-width="1.6"/>
<path d="M599.7 62h6" stroke="#2a78c0" stroke-width="1.8"/>
<path d="M602.7 59v6" stroke="#2a78c0" stroke-width="1.8"/>
<path d="M634 66l5 5" stroke="#d0a040" stroke-width="2.4"/>
<circle cx="630" cy="62" r="5.8" fill="#d8ecfa" stroke="#2a78c0" stroke-width="1.6"/>
<path d="M627 62h6" stroke="#2a78c0" stroke-width="1.8"/>
<rect x="651" y="55.6" width="8" height="8" fill="#3a9a3a"/><rect x="660" y="55.6" width="8" height="8" fill="#2a60b0"/><rect x="651" y="64.6" width="8" height="7" fill="#2a60b0"/><rect x="660" y="64.6" width="8" height="7" fill="#3a9a3a"/>
<path d="M653 59h4M662 59h4M653 68h4M662 68h4" stroke="#e0f0e0" stroke-width="2"/>
<path d="M688 56.5V70.5M686 68.5H698.5" stroke="#333" stroke-width="1.2" fill="none"/>
<path d="M691 60v6l3.5-3z" fill="#30a030"/>
<path d="M715 56.5V70.5M713 68.5H726.5" stroke="#333" stroke-width="1.2" fill="none"/>
<path d="M720 60v6l3.5-3z" fill="#c03030"/>
<rect x="743.5" y="55.5" width="10" height="13" fill="#fafafa" stroke="#556" stroke-width="1.2"/>
<path d="M746 58v8h5" stroke="#333" stroke-width="1.4" fill="none"/>
<path d="M750.5 68H759.5M755 63.5V72.5" stroke="#22b830" stroke-width="3.2"/>
<path d="M765.2 62.5h7l-3.5 3.5z" fill="#111"/>
<path d="M805.0 62.5h7l-3.5 3.5z" fill="#111"/>
<path d="M844.5 62.5h7l-3.5 3.5z" fill="#111"/>
<circle cx="789.5" cy="63.4" r="7.5" fill="#eef4fa" stroke="#1a5aa0" stroke-width="2.2"/><path d="M789.5 59v4.5h3" stroke="#c03030" stroke-width="1" fill="none"/>
<rect x="821" y="56.7" width="16.5" height="14" fill="#e8f2fa" stroke="#3a6a98" stroke-width="1.3"/><rect x="821" y="56.7" width="16.5" height="3" fill="#3a6a98"/><path d="M823 64q3-2 6 0t6 0M823 67q3-2 6 0t6 0" stroke="#555" stroke-width="0.9" fill="none"/>
<circle cx="1240.5" cy="61.5" r="3.8" fill="#d8e8f8" stroke="#2a60b0" stroke-width="1.6"/><path d="M1238 64.5l-4 4" stroke="#2a60b0" stroke-width="2.2"/>
<ellipse cx="1263" cy="67" rx="5" ry="4" fill="#e8eef4" stroke="#a0b0c0" stroke-width="1"/>
<circle cx="1272" cy="62" r="6" fill="#e03020"/><text x="1269.5" y="66" font-size="9" fill="#fff">1</text>
<rect x="1229" y="30" width="51" height="19" fill="#fbfbfb"/><path d="M1249.5 31v17M1267.5 31v17" stroke="#e8e8e8" stroke-width="1"/>
<path d="M1236 41.5h4" stroke="#222" stroke-width="1.3"/>
<rect x="1256.5" y="38.5" width="5" height="5" fill="none" stroke="#333" stroke-width="0.9"/><path d="M1258.5 36.5h5v5" stroke="#333" stroke-width="0.9" fill="none"/>
<path d="M1275 37l4 4M1279 37l-4 4" stroke="#333" stroke-width="1"/>
<rect x="11.5" y="31.5" width="12" height="9" fill="none" stroke="#7a8a9a" stroke-width="0.9"/><rect x="14.5" y="35.5" width="11" height="9" fill="#f4f6f8" stroke="#7a8a9a" stroke-width="0.9"/><path d="M16 41l2-2 2 2 2-2" stroke="#555" stroke-width="0.8" fill="none"/>
<path d="M21 83l0 13 3-3 3 5 2-1-3-5 4-0.5z" fill="#404040"/>
<path d="M44 90.5h7M54 90.5h7M52.5 82.5v6.5M52.5 92v6.5" stroke="#505050" stroke-width="1.4"/>
<path d="M84.5 83v15" stroke="#606060" stroke-width="1.2"/>
<path d="M107 90.5h12.5" stroke="#606060" stroke-width="1.3"/>
<path d="M133.5 97.5l13-13" stroke="#555" stroke-width="1.4"/>
<path d="M159 95l9-10M162 97l10-11M160 89h12M159 92h12" stroke="#555" stroke-width="1.3"/><text x="170" y="100" font-size="5" fill="#555">E</text>
<path d="M187 84h14M187 87h14M187 90h14M187 93h14M194 93v5" stroke="#666" stroke-width="1" stroke-dasharray="1.3 0.7"/>
<text x="216.5" y="95" font-size="11" font-weight="bold" fill="#505050">A</text>
<rect x="243.5" y="84.5" width="12" height="13" fill="none" stroke="#aaa" stroke-width="0.8" stroke-dasharray="1 1"/><text x="244.5" y="96" font-size="12" font-weight="bold" fill="#505050">T</text>
<rect x="269" y="87" width="14.5" height="8" fill="#808080" stroke="#606060" stroke-width="0.8" rx="1"/>
<path d="M298 85l3 4 3-2M302 95l3-4 4 4" stroke="#444" stroke-width="2" fill="none"/>
<path d="M317.5 88.5h7l-3.5 3.5z" fill="#111"/>
</svg>
<!-- timeframes -->
<div class="t tf" style="left:343px">M1</div>
<div class="t tf" style="left:369px">M5</div>
<div class="t tf" style="left:394px">M15</div>
<div class="t tf" style="left:422px">M30</div>
<div class="t tf" style="left:452px">H1</div>
<div class="t tf" style="left:478px">H4</div>
<div class="t tf" style="left:507px">D1</div>
<div class="t tf" style="left:534px">W1</div>
<div class="t tf" style="left:560px">MN</div>


<!-- tabs -->
<div class="t" style="left:24px;top:649px;font-size:11.25px;color:#666">XAUUSDx,M15</div>
<div class="a" style="left:114px;top:644px;width:90px;height:21px;background:#fff;border:1px solid #222;border-top:none"></div>
<div class="t" style="left:123px;top:649px;font-size:11.1px;color:#111">XAUUSDx,H1</div>
<div class="t" style="left:214px;top:649px;font-size:11.25px;color:#666">XAUUSDx,H4</div>
<svg class="a" style="left:0;top:640px" width="1280" height="80" viewBox="0 640 1280 80" font-family="Liberation Sans, sans-serif">
<rect x="8" y="643" width="1272" height="1" fill="#fafafa"/>
<path d="M678.5 667V680" stroke="#a0a0a0" stroke-width="1"/>
<path d="M785.5 667V680" stroke="#a0a0a0" stroke-width="1"/>
<path d="M858.5 667V680" stroke="#a0a0a0" stroke-width="1"/>
<path d="M931.5 667V680" stroke="#a0a0a0" stroke-width="1"/>
<path d="M1002.5 667V680" stroke="#a0a0a0" stroke-width="1"/>
<text x="682.5" y="682" font-size="11.5" fill="#222">2024.03.01 10:00</text>
<text x="789.7" y="682" font-size="11.5" fill="#222">O: 2045.41</text>
<text x="862.9" y="682" font-size="11.5" fill="#222">H: 2045.61</text>
<text x="935" y="682" font-size="11.5" fill="#222">L: 2039.03</text>
<text x="1005.5" y="682" font-size="11.5" fill="#222">C: 2039.03</text>
<text x="1075" y="682" font-size="11.5" fill="#222">V: 9036</text>
<text x="9.5" y="682" font-size="11.2" fill="#222">For Help, press F1</text>
<path d="M1256 652l-3 3 3 3z" fill="#b0b0b0"/><path d="M1274 652l3 3-3 3z" fill="#b0b0b0"/>
<path d="M8.5 644V665" stroke="#b0b0b0"/>
<rect x="0" y="680" width="1280" height="40" fill="#1e1e1e"/>
<path d="M15.5 693.5l7-1v7h-7zM23.5 692.4l8.5-1.2v8.3h-8.5zM15.5 700.5h7v7l-7-1zM23.5 700.5h8.5v8.3l-8.5-1.2z" fill="#fff"/>
<circle cx="75" cy="696" r="6.5" fill="none" stroke="#fff" stroke-width="2"/><path d="M70.5 700.5l-8 8" stroke="#fff" stroke-width="2.2"/>
<path d="M112 691.5h11M112 706.5h11M113 691.5v15M122 691.5v15" stroke="#fff" stroke-width="1.4" stroke-dasharray="3 1.5"/><rect x="126" y="697" width="1.6" height="1.6" fill="#fff"/>
<path d="M157 689l19 2v12l-19-2z" fill="#2838b8" stroke="#e8e8f0" stroke-width="1.5"/><path d="M160 692l12 1v6" stroke="#8090e0" stroke-width="2" fill="none"/>
<ellipse cx="172" cy="707" rx="8" ry="4.5" fill="#e8e8e8"/><path d="M170 708l2-3 2 2 2-3" stroke="#3a8a3a" stroke-width="1.2" fill="none"/>
<circle cx="209" cy="699.6" r="12.5" fill="#2e78d0"/><rect x="202" y="693" width="14" height="9.5" fill="#e8f0fa"/><path d="M203.5 701.5l11-7.5" stroke="#5a9ae0" stroke-width="2.5"/><path d="M205 705.5h8" stroke="#e8f0fa" stroke-width="1.6"/>
<path d="M239 691h8l2 2h12v15h-22z" fill="#e8b838"/><rect x="239" y="695" width="22" height="13" fill="#f4d060"/><path d="M246 708v-6h8v6" fill="none" stroke="#3a88c8" stroke-width="2.4"/>
<rect x="284" y="688.5" width="19" height="22" rx="1.5" fill="#1a5ac0"/><rect x="284" y="688.5" width="19" height="7" fill="#40a0f0"/><rect x="284" y="695.5" width="19" height="7" fill="#2a7ae0"/><rect x="278.5" y="693.5" width="12" height="12" rx="1" fill="#1a4aa8"/><text x="279.8" y="703.5" font-size="10" font-weight="bold" fill="#fff">W</text>
<rect x="326" y="689" width="18" height="22" rx="1.5" fill="#1a7a40"/><rect x="326" y="689" width="18" height="7" fill="#30a860"/><rect x="326" y="696" width="18" height="7" fill="#20904c"/><rect x="320" y="694" width="12" height="12" rx="1" fill="#10643a"/><text x="322.5" y="704" font-size="9.5" font-weight="bold" fill="#fff">x</text>
<circle cx="374" cy="700" r="12" fill="#e03a30"/><path d="M374 700L364 693A12 12 0 0 1 385 696Z" fill="#e03a30"/><path d="M374 700L385 696A12 12 0 0 1 376 712Z" fill="#f8c828"/><path d="M374 700L376 712A12 12 0 0 1 362.5 697Z" fill="#28a048"/><circle cx="374" cy="700" r="5.5" fill="#fff"/><circle cx="374" cy="700" r="4.2" fill="#3a80e8"/>
<circle cx="381" cy="706" r="6" fill="#a02020"/>
<rect x="358" y="717" width="33" height="3" fill="#76b9ed"/>
<rect x="405" y="688" width="22" height="20" rx="3" fill="#1a2a3a"/><path d="M412 693l5 3-5 3z" fill="#40d0e0"/><rect x="407" y="705" width="18" height="5" rx="2" fill="#fff"/>
<rect x="444" y="688" width="25" height="23" fill="#fff"/><path d="M447 704l8-14h3l-8 14zM451 704l8-14h3l-8 14zM455 704l8-14h3l-8 14z" fill="#50b030"/><rect x="446" y="705" width="21" height="4" fill="#203020"/>
<rect x="494" y="690" width="13" height="16" fill="#e0ecf8" stroke="#5a88b8" stroke-width="1"/><rect x="490" y="694" width="10" height="12" fill="#c8dcf0" stroke="#5a88b8" stroke-width="1"/><circle cx="492" cy="702" r="3" fill="#f0a070"/><path d="M487 710q5-6 10 0z" fill="#40a040"/>
<rect x="519" y="680" width="39" height="40" fill="#3a3a3a"/><rect x="525.5" y="688" width="24.5" height="23" rx="2" fill="#1e78c8"/><path d="M530 706v-9l3-2v11zM535 706v-12l3 2v10zM540 706v-9l4-3v12z" fill="#e8f2fc"/><rect x="519" y="717" width="39" height="3" fill="#76b9ed"/>
<ellipse cx="578" cy="695" rx="10" ry="6" fill="#e8e8f0"/><path d="M569 694q8-6 18 0" stroke="#c03030" stroke-width="2" fill="none"/><circle cx="575" cy="706" r="2.5" fill="none" stroke="#40a0e0" stroke-width="1.5"/><circle cx="585" cy="706" r="2.5" fill="none" stroke="#40a0e0" stroke-width="1.5"/><path d="M576 704l8-7M584 704l-8-7" stroke="#40a0e0" stroke-width="1.3"/>
<circle cx="619.5" cy="700" r="11.5" fill="#e02020"/><text x="615.5" y="703" font-size="10" font-weight="bold" fill="#fff">$</text><rect x="614" y="706" width="11" height="1.5" fill="#fff"/>
<rect x="648" y="688" width="24" height="24" fill="#000"/><text x="649" y="704" font-size="9" font-weight="bold" fill="#fff">HF</text><text x="663" y="704" font-size="9" font-weight="bold" fill="#e02020">M</text>
<rect x="689" y="688.5" width="23.5" height="23.5" rx="3" fill="#3a78c8"/><circle cx="701" cy="700" r="9" fill="#d8e4f4"/><path d="M693 704l14-9" stroke="#d03030" stroke-width="5" stroke-linecap="round"/>
<path d="M733 690l14 2-3 19-14-2z" fill="#a8d8e8" stroke="#d8f0f8" stroke-width="1"/><path d="M735 692l10 1.5" stroke="#4a8ab0" stroke-width="1"/>
<ellipse cx="781" cy="702" rx="11" ry="8" fill="#e8e0d0"/><circle cx="776" cy="700" r="2" fill="#e04040"/><circle cx="781" cy="697" r="2" fill="#40a0e0"/><circle cx="786" cy="702" r="2" fill="#f0c030"/><path d="M785 710l8-19" stroke="#c8a060" stroke-width="2.5"/>
<rect x="812.5" y="688.5" width="19" height="24" rx="2" fill="#6a7a90"/><rect x="814.5" y="690.5" width="15" height="4" fill="#60b0e8"/>
<rect x="815" y="697" width="3.8" height="3.8" fill="#e8eef4"/>
<rect x="820" y="697" width="3.8" height="3.8" fill="#e8eef4"/>
<rect x="825" y="697" width="3.8" height="3.8" fill="#e8eef4"/>
<rect x="815" y="702" width="3.8" height="3.8" fill="#e8eef4"/>
<rect x="820" y="702" width="3.8" height="3.8" fill="#e8eef4"/>
<rect x="825" y="702" width="3.8" height="3.8" fill="#2a4a80"/>
<rect x="815" y="707" width="3.8" height="3.8" fill="#e8eef4"/>
<rect x="820" y="707" width="3.8" height="3.8" fill="#e8eef4"/>
<rect x="825" y="707" width="3.8" height="3.8" fill="#2a4a80"/>
<circle cx="863" cy="699.5" r="11" fill="#1e1e1e" stroke="#30c050" stroke-width="2.6"/><path d="M853 711l2.5-5 4 3z" fill="#30c050"/><path d="M858.5 695q1 6 8 8l2-2-2.5-1.5-1.5 1q-3-1.5-4-4l1-1.5-1.5-2.5z" fill="#30c050"/>
<circle cx="922" cy="700" r="11" fill="#f0a830"/><path d="M911 697h23M913 702h22M915 707h15" stroke="#fff" stroke-opacity="0.8" stroke-width="1.4"/>
<text x="942.5" y="706" font-size="13.5" fill="#fff">25°C</text>
<path d="M1002 705l5-5 5 5" stroke="#fff" stroke-width="1.3" fill="none"/>
<rect x="1034" y="696" width="9" height="9" fill="none" stroke="#fff" stroke-width="1.1" stroke-dasharray="2 1"/><path d="M1043 699l2.5-1.5v6l-2.5-1.5" stroke="#fff" stroke-width="1" fill="none"/>
<rect x="1066" y="695" width="12" height="8" fill="none" stroke="#fff" stroke-width="1.1"/><path d="M1064 695v-3M1078 699h1.5" stroke="#fff" stroke-width="1.1"/>
<path d="M1097 708q3-9 12-12M1100 708q2-6 9-8M1103 708q1-3 6-5" stroke="#fff" stroke-width="1.2" fill="none" stroke-dasharray="2 1"/><circle cx="1107" cy="707" r="1.2" fill="#fff"/>
<path d="M1127 697h3l4-3v12l-4-3h-3z" fill="none" stroke="#fff" stroke-width="1.1"/><path d="M1137 697q2 3 0 6" stroke="#fff" stroke-width="1" fill="none"/>
<text x="1177" y="695" font-size="12" fill="#fff">6:25</text>
<text x="1157.5" y="714" font-size="12.5" fill="#fff">06/03/2024</text>
<path d="M1239 692.5h16v11h-6l-2 3-2-3h-6z" fill="#fff"/><path d="M1242 695.5h10M1242 698h10M1242 700.5h7" stroke="#1e1e1e" stroke-width="1"/>
<path d="M1275.5 680V720" stroke="#5a5a5a"/>
<ellipse cx="1060" cy="677.5" rx="12.3" ry="13.5" fill="#fff" stroke="#202020" stroke-width="1"/>
<path d="M1058 692V678.5M1054 678.5H1063M1058 679V673q0-4 5-4" stroke="#1a1a1a" stroke-width="2" fill="none"/>
<g stroke="#202020" stroke-width="1.6" paint-order="stroke" fill="#fff">
<text x="1080" y="686" font-size="26.2">@wtelindonesia</text>
</g>
</svg>

</body></html>
